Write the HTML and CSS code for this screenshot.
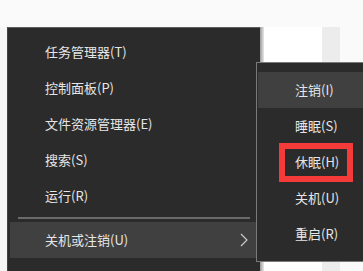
FILE: index.html
```html
<!DOCTYPE html>
<html lang="zh-CN">
<head>
  <meta charset="UTF-8">
  <title>关机或注销</title>
  <link rel="stylesheet" href="styles.css">
</head>
<body>
  <div class="topbar"></div>
  <div class="screen">
    <div class="edge"></div>
    <div class="menu">
      <ul class="items">
        <li>任务管理器(T)</li>
        <li>控制面板(P)</li>
        <li>文件资源管理器(E)</li>
        <li>搜索(S)</li>
        <li>运行(R)</li>
      </ul>
      <div class="sep"></div>
      <div class="item active">
        <span>关机或注销(U)</span>
        <svg class="chevron" width="8" height="14" viewBox="0 0 8 14">
          <polyline points="1,1 7,7 1,13" fill="none" stroke="#d0d0d0" stroke-width="1.1"/>
        </svg>
      </div>
    </div>
    <div class="shadow"></div>
    <div class="page">
      <div class="col white"></div>
      <div class="col grey"></div>
      <div class="col light"></div>
    </div>

    <div class="submenu">
      <div class="sub-item active">注销(I)</div>
      <div class="sub-item">睡眠(S)</div>
      <div class="sub-item marked">休眠(H)</div>
      <div class="sub-item">关机(U)</div>
      <div class="sub-item">重启(R)</div>
    </div>
  </div>
</body>
</html>
```

FILE: styles.css
```css
body {
  margin: 0;
  background-color: #fafafa;
  font-family: "Noto Sans CJK SC", "Noto Sans", sans-serif;
  width: 363px;
  height: 271px;
  overflow: hidden;
}
.topbar {
  height: 27px;
  background-color: #fafafa;
}
.screen {
  position: relative;
  display: flex;
  height: 244px;
}
.edge {
  width: 7px;
  background-color: #f6f6f6;
}
.menu {
  width: 253px;
  background-color: #2b2b2b;
  border-top: 1px solid #5c5c5c;
  border-left: 1px solid #444;
  padding-top: 6px;
  box-sizing: border-box;
}
.items {
  list-style: none;
  margin: 0;
  padding: 0;
}
.items li,
.item {
  height: 36px;
  line-height: 36px;
  padding-left: 37px;
  font-size: 13px;
  color: #e6e6e6;
}
.sep {
  height: 2px;
  margin: 3px 10px 3px 10px;
  background-color: #6a6a6a;
}
.item.active {
  background-color: #404040;
  margin-left: 2px;
  padding-left: 35px;
  display: flex;
  justify-content: space-between;
  align-items: center;
  padding-right: 12px;
}
.chevron {
  display: block;
}
.shadow {
  width: 4px;
  background: linear-gradient(to right, #9a9a9a, #e8e8e8);
}
.page {
  flex: 1;
  display: flex;
}
.col.white {
  width: 58px;
  background-color: #fff;
}
.col.grey {
  width: 18px;
  background-color: #ececec;
}
.col.light {
  flex: 1;
  background-color: #fafafa;
}
.submenu {
  position: absolute;
  left: 256px;
  top: 35px;
  width: 120px;
  padding: 9px 0 9px 1px;
  background-color: #2b2b2b;
  border: 1px solid #7a7a7a;
}
.sub-item {
  height: 36px;
  line-height: 36px;
  padding-left: 37px;
  font-size: 13px;
  color: #e6e6e6;
}
.sub-item.active {
  background-color: #404040;
}
.sub-item.marked {
  position: relative;
}
.sub-item.marked::after {
  content: "";
  position: absolute;
  left: 21px;
  top: -1px;
  width: 62px;
  height: 27px;
  border: 6px solid #f53a3a;
}
```
